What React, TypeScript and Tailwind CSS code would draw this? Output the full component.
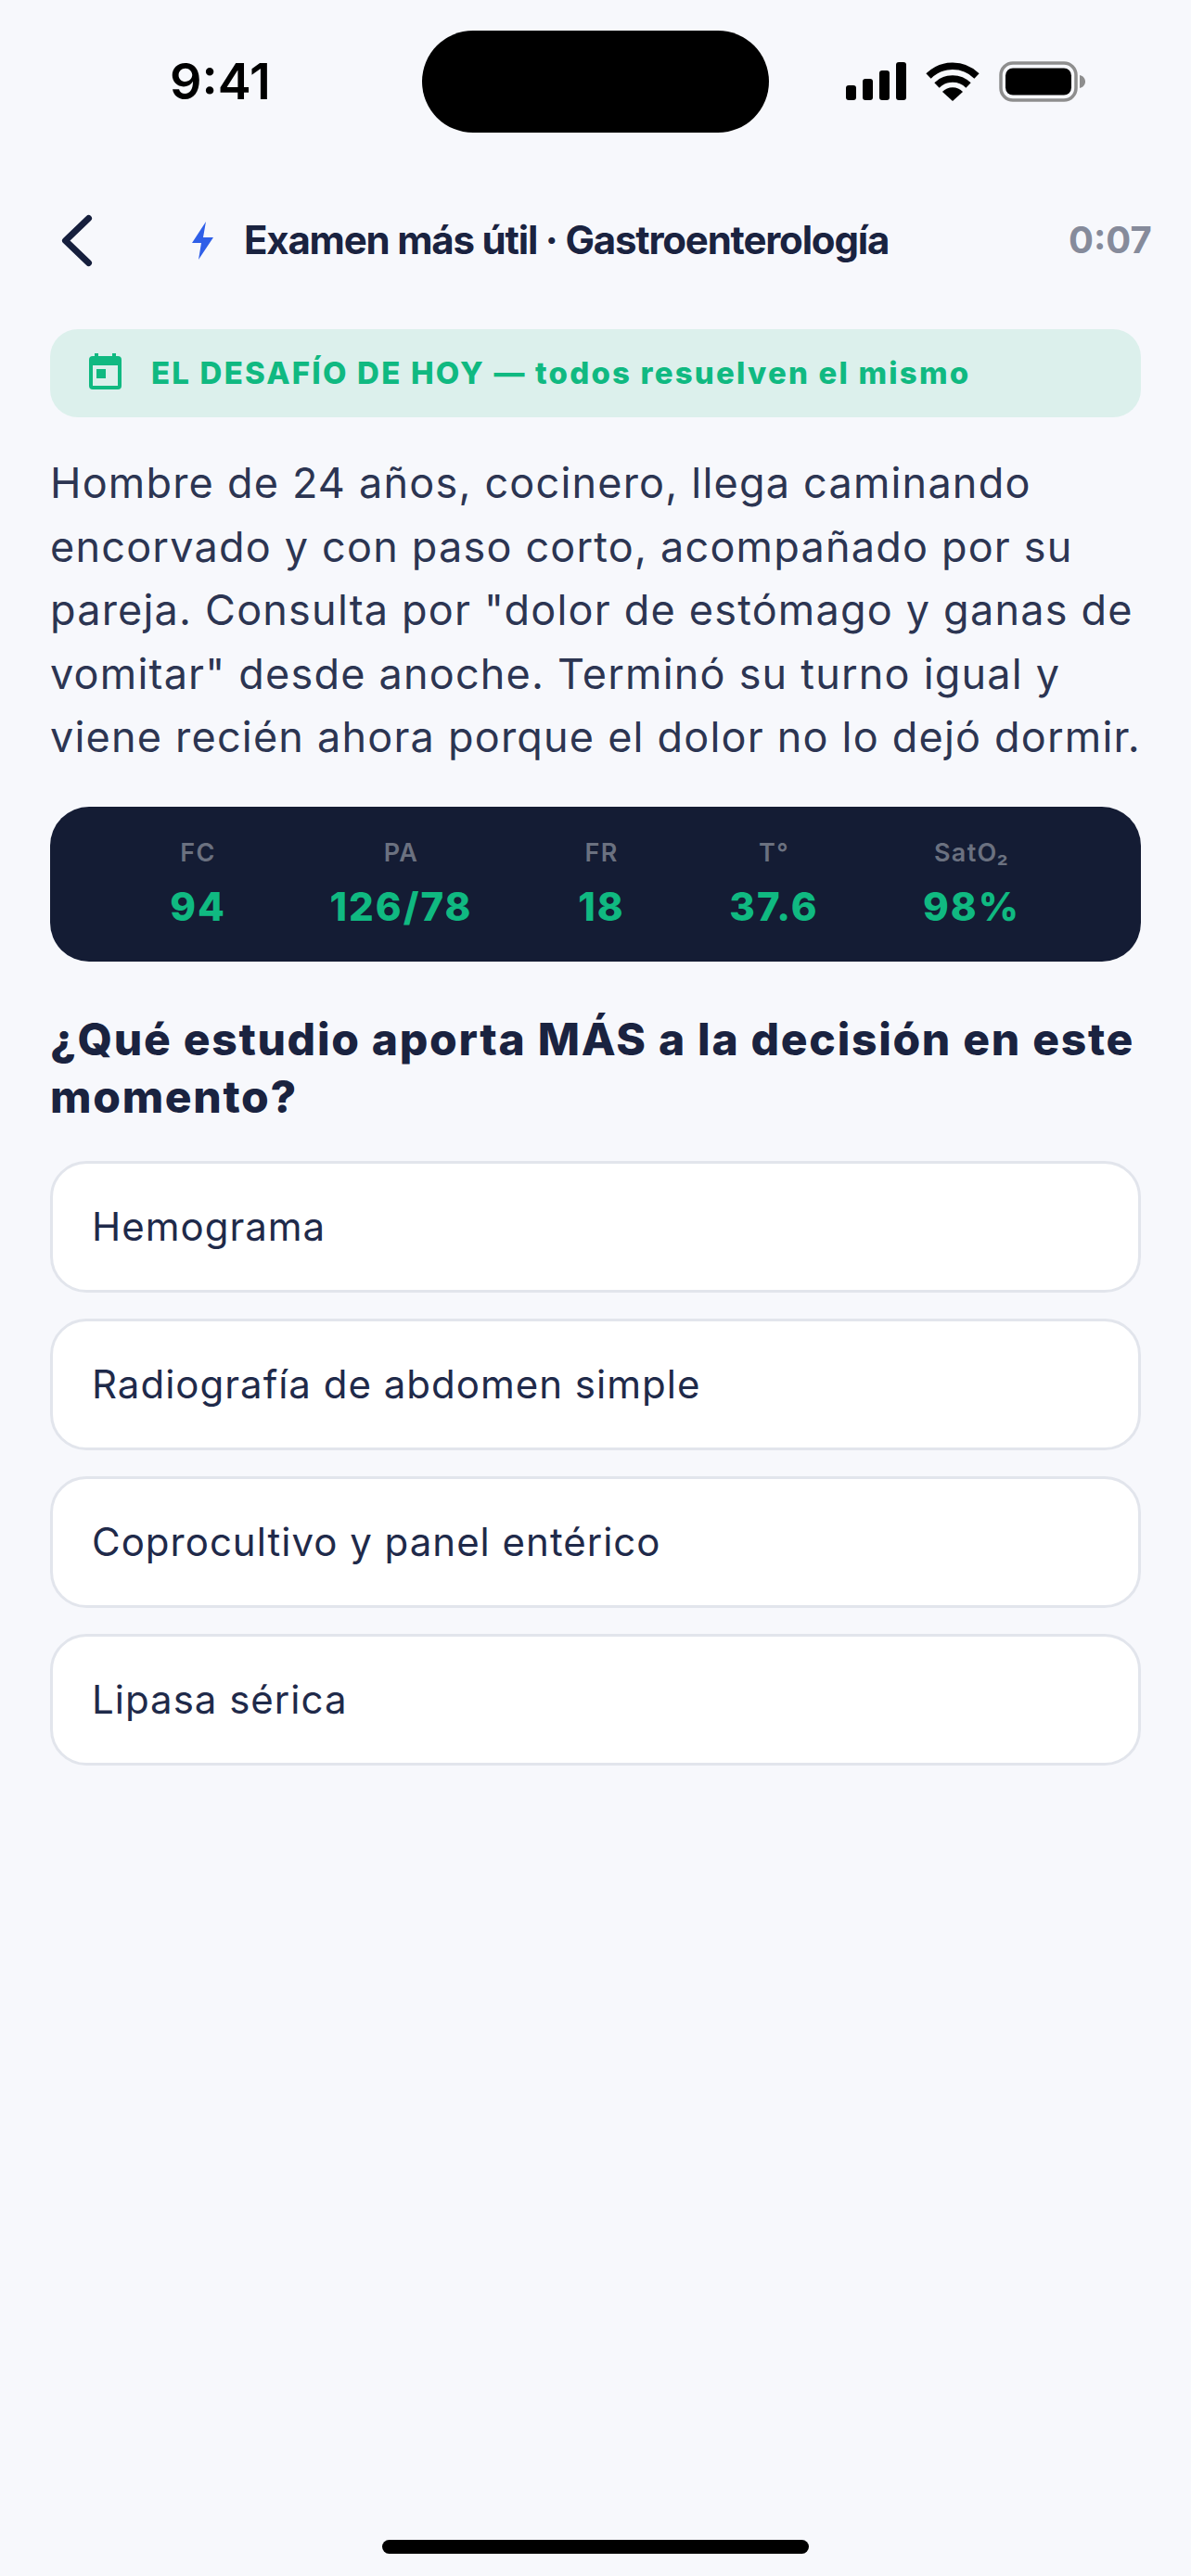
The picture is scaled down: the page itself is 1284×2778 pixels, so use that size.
import React from "react";

const vitals = [
  { l: "FC", v: "94", w: "w-[219px]" },
  { l: "PA", v: "126/78", w: "w-[219px]" },
  { l: "FR", v: "18", w: "w-[213px]" },
  { l: "T°", v: "37.6", w: "w-[159px]" },
  { l: "SatO₂", v: "98%", w: "w-[267px]" },
];
const options = ["Hemograma", "Radiografía de abdomen simple", "Coprocultivo y panel entérico", "Lipasa sérica"];

export default function App() {
  return (
    <div className="relative w-[1284px] h-[2778px] bg-[#f7f8fc] font-['Inter',sans-serif] overflow-hidden">
      <div className="flex items-center h-[110px] pt-[33px] box-content">
        <div className="w-[455px] pl-[183px] text-[54px] font-semibold text-black leading-none">9:41</div>
        <div className="w-[374px] h-[110px] bg-black rounded-[55px]" />
        <div className="flex items-center pl-[83px] gap-[21px]">
          <svg width="65" height="42" viewBox="0 0 65 42">
            <rect x="0" y="25" width="11" height="16" rx="3" fill="#000" />
            <rect x="18" y="18" width="11" height="23" rx="3" fill="#000" />
            <rect x="36" y="9" width="11" height="32" rx="3" fill="#000" />
            <rect x="54" y="0" width="11" height="41" rx="3" fill="#000" />
          </svg>
          <svg width="58" height="42" viewBox="0 0 58 42">
            <path d="M3 15 A37 37 0 0 1 55 15" fill="none" stroke="#000" strokeWidth="7.5" />
            <path d="M12 25 A24 24 0 0 1 46 25" fill="none" stroke="#000" strokeWidth="7.5" />
            <path d="M18 32 A15 15 0 0 1 40 32 L29 42 Z" fill="#000" />
          </svg>
          <svg width="93" height="44" viewBox="0 0 93 44">
            <rect x="2" y="2" width="81" height="40" rx="13" fill="none" stroke="#8e8e8e" strokeWidth="3.5" />
            <rect x="7" y="7.5" width="71" height="29" rx="8" fill="#000" />
            <path d="M87 15 C91 16 93 19 93 22 C93 25 91 28 87 29 Z" fill="#8e8e8e" />
          </svg>
        </div>
      </div>

      <div className="pt-[65px] px-[54px]">
        <div className="relative h-[100px] flex items-center">
          <svg width="44" height="66" viewBox="0 0 44 66" className="absolute left-[9px] top-[18px]">
            <path d="M32.5 9.5 L7.5 33.5 L32.5 57.5" fill="none" stroke="#161f3d" strokeWidth="7" strokeLinecap="round" strokeLinejoin="round" />
          </svg>
          <svg width="24" height="42" viewBox="0 0 24 42" className="absolute left-[153px] top-[31px]">
            <path d="M15 0 L0 23 L10 23 L7 41 L23 17 L12 17 Z" fill="#2f5fe8" />
          </svg>
          <div className="absolute left-[209px] top-[26px] text-[42px] leading-[50px] font-bold text-[#1a2340] tracking-[-1.2px] whitespace-nowrap">
            Examen más útil · Gastroenterología
          </div>
          <div className="absolute left-[1098px] top-[26px] text-[40px] leading-[50px] font-bold text-[#868b9b] whitespace-nowrap">0:07</div>
        </div>

        <div className="mt-[47px] h-[95px] rounded-[30px] bg-[#dcf0ec] flex items-center pl-[42px] gap-[32px]">
          <svg width="35" height="39" viewBox="0 0 35 39" className="mb-[4px] shrink-0">
            <path d="M6 0h4v3h15V0h4v3h2a4 4 0 0 1 4 4v28a4 4 0 0 1-4 4H4a4 4 0 0 1-4-4V7a4 4 0 0 1 4-4h2z M4 13v22h27V13z M8 17h10v10H8z" fill="#10b981" fillRule="evenodd" />
          </svg>
          <div className="text-[33px] font-extrabold tracking-[2.2px] text-[#10b981] whitespace-nowrap">EL DESAFÍO DE HOY — todos resuelven el mismo</div>
        </div>

        <p className="mt-[37px] text-[45px] leading-[68.6px] text-[#2c3552] tracking-[1.2px] whitespace-nowrap">
          Hombre de 24 años, cocinero, llega caminando<br />
          encorvado y con paso corto, acompañado por su<br />
          pareja. Consulta por "dolor de estómago y ganas de<br />
          vomitar" desde anoche. Terminó su turno igual y<br />
          viene recién ahora porque el dolor no lo dejó dormir.
        </p>

        <div className="mt-[40px] h-[167px] rounded-[42px] bg-[#141c34] flex items-start pl-[50px] pt-[34px]">
          {vitals.map((x) => (
            <div key={x.l} className={`${x.w} flex flex-col items-center shrink-0`}>
              <div className="text-[27px] leading-[32px] font-semibold tracking-[1.3px] text-[#6b7180]">{x.l}</div>
              <div className="mt-[17px] text-[42px] leading-[50px] font-extrabold tracking-[2px] text-[#10b981]">{x.v}</div>
            </div>
          ))}
        </div>

        <h2 className="mt-[53px] text-[48px] leading-[62px] font-extrabold text-[#1a2340] tracking-[1.7px] whitespace-nowrap">
          ¿Qué estudio aporta MÁS a la decisión en este<br />momento?
        </h2>

        <div className="mt-[38px] flex flex-col gap-[28px]">
          {options.map((o) => (
            <div key={o} className="h-[142px] rounded-[39px] border-[3px] border-[#e2e5ec] bg-white flex items-center pl-[42px] text-[42px] font-normal text-[#1f2a4a] tracking-[1px]">
              {o}
            </div>
          ))}
        </div>
      </div>

      <div className="absolute left-[412px] top-[2739px] w-[460px] h-[15px] rounded-full bg-black" />
    </div>
  );
}
